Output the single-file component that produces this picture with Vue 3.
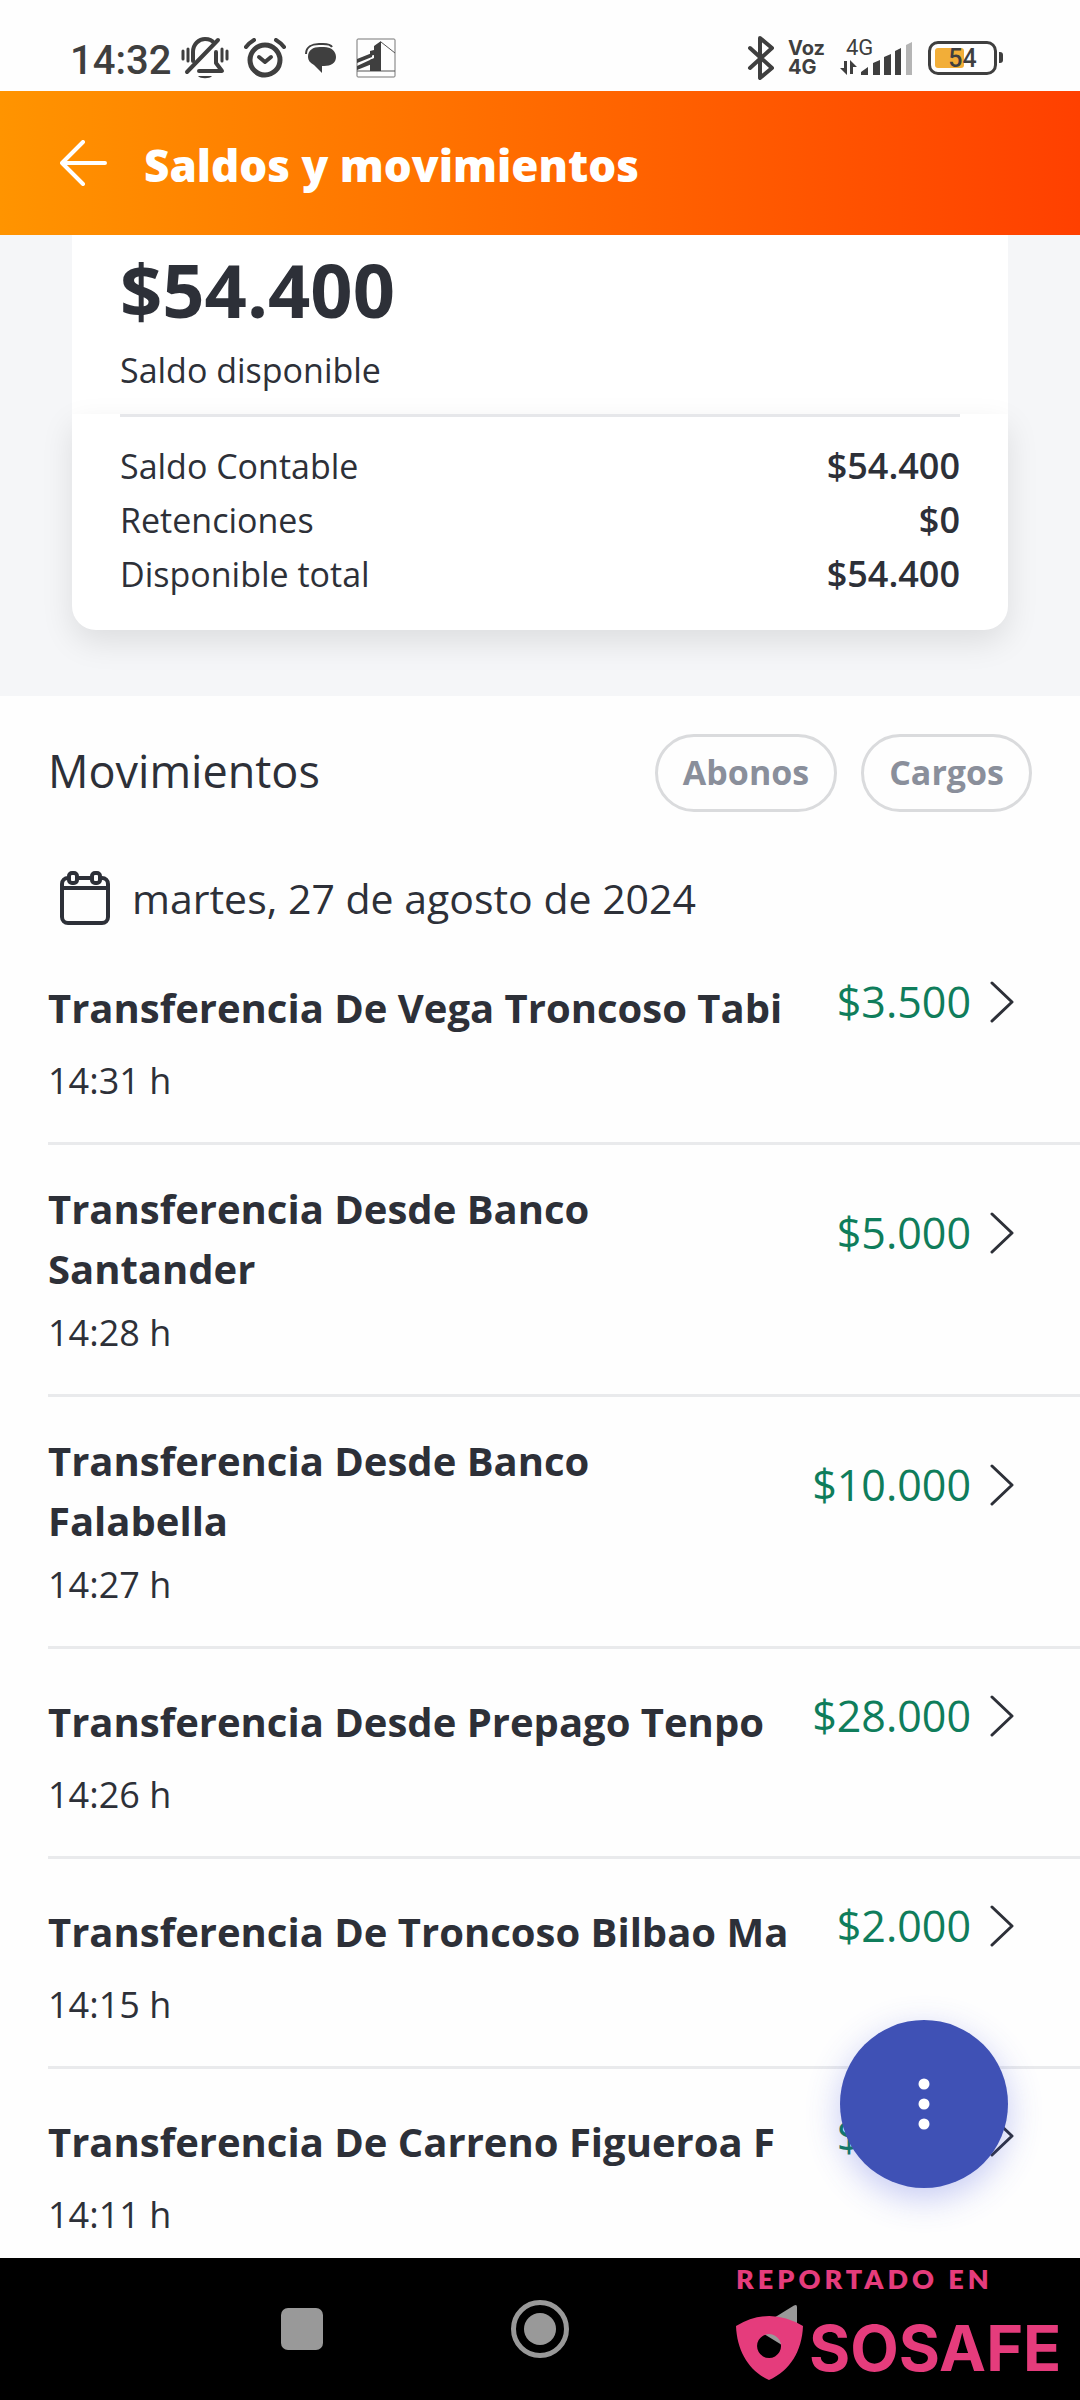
<script setup>
const balances = [
  { label: 'Saldo Contable', value: '$54.400' },
  { label: 'Retenciones', value: '$0' },
  { label: 'Disponible total', value: '$54.400' },
]

const filters = ['Abonos', 'Cargos']

const movements = [
  { title: 'Transferencia De Vega Troncoso Tabi', time: '14:31 h', amount: '$3.500' },
  { title: 'Transferencia Desde Banco Santander', time: '14:28 h', amount: '$5.000' },
  { title: 'Transferencia Desde Banco Falabella', time: '14:27 h', amount: '$10.000' },
  { title: 'Transferencia Desde Prepago Tenpo', time: '14:26 h', amount: '$28.000' },
  { title: 'Transferencia De Troncoso Bilbao Ma', time: '14:15 h', amount: '$2.000' },
  { title: 'Transferencia De Carreno Figueroa F', time: '14:11 h', amount: '$5.000' },
]
</script>

<template>
  <div class="app">
    <div class="status">
      <div class="status-left">
        <span class="clock">14:32</span>
        <svg class="i-bell" width="48" height="42" viewBox="0 0 48 42" fill="none" stroke="#3f3f3f" stroke-width="4" stroke-linecap="round">
          <path d="M2 14v8M7 12v12M46 14v8M41 12v12" stroke-width="3" />
          <path d="M12 24V15c0-8 6-13 12-13 4 0 7 1 9 4" />
          <path d="M35 15v11l6 8H18" stroke-linejoin="round" />
          <path d="M37 3L6 35" />
          <path d="M17 39h14c-2 3-12 3-14 0z" fill="#3f3f3f" stroke="none" />
        </svg>
        <svg class="i-alarm" width="42" height="40" viewBox="0 0 42 40" fill="none" stroke="#3f3f3f" stroke-linecap="round" stroke-linejoin="round">
          <circle cx="21" cy="22" r="15" stroke-width="5" />
          <path d="M15 19l6 5 6-5" stroke-width="4" />
          <path d="M2 9q3-4 8-7M40 9q-3-4-8-7" stroke-width="4" />
        </svg>
        <svg class="i-chat" width="32" height="32" viewBox="0 0 32 32">
          <path d="M1 12C1 5 7 2 14 2h4c5 0 8 1 9 3" fill="none" stroke="#3f3f3f" stroke-width="2" />
          <path d="M3 15C3 8 8 5 15 5h4c7 0 12 4 12 10 0 6-5 9-12 9h-2v7l-8-8c-4-2-6-5-6-8z" fill="#3f3f3f" />
        </svg>
        <svg class="i-photo" width="40" height="40" viewBox="0 0 40 40">
          <rect x="1" y="1" width="38" height="38" rx="1" fill="none" stroke="#777" />
          <path d="M1 33h38M25 4l14 11" stroke="#555" fill="none" />
          <path d="M14 33V22l4-2v-3l-4 1v-5l4-1V8l7-5v30z" fill="#3f3f3f" />
          <path d="M1 21l15-6v4L1 25zM1 28l15-7v5L1 32z" fill="#3f3f3f" />
        </svg>
      </div>
      <div class="status-right">
        <svg width="28" height="44" viewBox="0 0 28 44" fill="none" stroke="#3f3f3f" stroke-width="4" stroke-linecap="round" stroke-linejoin="round">
          <path d="M3 12l22 20-12 10V2l12 10L3 32" />
        </svg>
        <span class="volte"><span>Voz</span><span>4G</span></span>
        <span class="signal">
          <span class="net">4G</span>
          <svg width="74" height="36" viewBox="0 0 74 36" fill="#3f3f3f">
            <path d="M4 21h3v14l-7-7h4zM10 34V20l7 7h-4v7z" />
            <path d="M21 35v-3l7-5v8zM33 35V23l7-3v15zM44 35V17l7-3v21zM55 35V11l6-3v27z" />
            <path d="M66 35V5l6-3v33z" fill="#b5b5b5" />
          </svg>
        </span>
        <span class="battery"><span class="cell"><span class="charge"></span><span class="level">54</span></span></span>
      </div>
    </div>

    <header class="bar">
      <button class="back" type="button" aria-label="Volver">
        <svg width="48" height="46" viewBox="0 0 48 46" fill="none" stroke="#fff" stroke-width="4" stroke-linecap="round" stroke-linejoin="round">
          <path d="M23 2L2 23l21 21M2 23h43" />
        </svg>
      </button>
      <h1>Saldos y movimientos</h1>
    </header>

    <main class="content">
      <section class="summary">
        <div class="card-top">
          <p class="total">$54.400</p>
          <p class="total-label">Saldo disponible</p>
        </div>
        <div class="card-bottom">
          <dl>
            <div v-for="b in balances" :key="b.label" class="balance">
              <dt>{{ b.label }}</dt>
              <dd>{{ b.value }}</dd>
            </div>
          </dl>
        </div>
      </section>

      <section class="movements">
        <div class="head">
          <h2>Movimientos</h2>
          <button v-for="f in filters" :key="f" class="pill" type="button">{{ f }}</button>
        </div>
        <h3 class="date">
          <svg width="50" height="54" viewBox="0 0 50 54" fill="none" stroke="#2d3038" stroke-width="4">
            <path d="M9 7H8a6 6 0 0 0-6 6V46a6 6 0 0 0 6 6h34a6 6 0 0 0 6-6V13a6 6 0 0 0-6-6h-2M17 7h15M2 17h46" />
            <rect x="9" y="2" width="8" height="10" rx="3" />
            <rect x="32" y="2" width="8" height="10" rx="3" />
          </svg>
          martes, 27 de agosto de 2024
        </h3>
        <ul>
          <li v-for="m in movements" :key="m.time">
            <a class="row" href="#">
              <span class="info">
                <span class="title"><span>{{ m.title }}</span></span>
                <span class="time">{{ m.time }}</span>
              </span>
              <span class="amount">
                {{ m.amount }}
                <svg width="24" height="42" viewBox="0 0 24 42" fill="none" stroke="#2d3038" stroke-width="3" stroke-linecap="round" stroke-linejoin="round">
                  <path d="M2 2l20 19L2 40" />
                </svg>
              </span>
            </a>
          </li>
        </ul>
      </section>

      <button class="fab" type="button" aria-label="Más opciones">
        <svg width="12" height="52" viewBox="0 0 12 52" fill="#fff">
          <circle cx="6" cy="6" r="5.500" /><circle cx="6" cy="26" r="5.500" /><circle cx="6" cy="46" r="5.500" />
        </svg>
      </button>
    </main>

    <nav class="nav">
      <button type="button" aria-label="Recientes">
        <svg width="60" height="60" viewBox="0 0 60 60"><rect x="9" y="9" width="42" height="42" rx="7" fill="#999" /></svg>
      </button>
      <button type="button" aria-label="Inicio">
        <svg width="60" height="60" viewBox="0 0 60 60">
          <circle cx="30" cy="30" r="26.500" fill="none" stroke="#999" stroke-width="5" />
          <circle cx="30" cy="30" r="16" fill="#999" />
        </svg>
      </button>
      <button type="button" aria-label="Atrás">
        <svg width="60" height="60" viewBox="0 0 60 60"><path d="M46 6.500Q49 5 49 8v44q0 3-3 1.500L11 32q-2-2 0-4z" fill="#999" /></svg>
      </button>
      <div class="stamp">
        <span class="stamp-top">REPORTADO EN</span>
        <div class="stamp-brand">
          <svg width="67" height="64" viewBox="0 0 67 64" fill="#e53c7c">
            <path fill-rule="evenodd" d="M0 10Q33-10 67 10C66 35 54 55 33 64 13 55 1 35 0 10zM33 18a12 12 0 1 0 .1 0z" />
          </svg>
          <span>SOSAFE</span>
        </div>
      </div>
    </nav>
  </div>
</template>

<style>
body {
  margin: 0;
  background: #fff;
}
</style>

<style scoped>
.app {
  display: flex;
  flex-direction: column;
  height: 100vh;
  overflow: hidden;
  background: #fefefe;
  color: #2d3038;
  font-family: "Open Sans", "Noto Sans", sans-serif;
}
h1, h2, h3, p, ul, dl, dd {
  margin: 0;
  padding: 0;
}
ul {
  list-style: none;
}
button {
  margin: 0;
  padding: 0;
  border: 0;
  background: none;
  font-family: inherit;
  cursor: pointer;
}
svg {
  display: block;
  flex: none;
}

.status {
  display: flex;
  flex: none;
  justify-content: space-between;
  align-items: center;
  height: 67px;
  padding: 24px 77px 0 70px;
  color: #3f3f3f;
  font-family: Roboto, sans-serif;
}
.status-left,
.status-right {
  display: flex;
  align-items: center;
}
.clock {
  font-size: 40px;
  font-weight: 500;
  line-height: 40px;
  padding-top: 6px;
}
.i-bell {
  margin-left: 10px;
}
.i-alarm {
  margin-left: 15px;
}
.i-chat {
  margin-left: 19px;
}
.i-photo {
  margin-left: 19px;
}
.volte {
  display: flex;
  flex-direction: column;
  margin-left: 13px;
  width: 40px;
  font: 700 20px/19px Inter, sans-serif;
}
.signal {
  position: relative;
  margin-left: 12px;
}
.signal svg {
  margin-top: 1px;
}
.net {
  position: absolute;
  left: 6px;
  top: -2px;
  font-size: 22px;
  line-height: 22px;
}
.battery {
  display: flex;
  align-items: center;
  margin-left: 14px;
}
.battery::after {
  content: "";
  width: 4px;
  height: 11px;
  margin-left: 2px;
  border-radius: 0 3px 3px 0;
  background: #3f3f3f;
}
.cell {
  position: relative;
  box-sizing: border-box;
  width: 69px;
  height: 34px;
  padding: 4px;
  border: 3px solid #3f3f3f;
  border-radius: 10px;
}
.charge {
  display: block;
  width: 29px;
  height: 20px;
  border-radius: 3px;
  background: #f2ae38;
}
.level {
  position: absolute;
  inset: 0;
  font-size: 25px;
  font-weight: 500;
  line-height: 30px;
  text-align: center;
}

.bar {
  display: flex;
  flex: none;
  align-items: center;
  height: 144px;
  padding: 0 60px;
  gap: 36px;
  background: linear-gradient(90deg, #ff9400, #ff6a00 50%, #ff4000);
  color: #fff;
}
.bar h1 {
  padding-top: 4px;
  font-size: 44px;
  font-weight: 800;
  line-height: 60px;
}

.content {
  position: relative;
  flex: 1;
  min-height: 0;
  overflow: hidden;
}
.summary {
  padding: 0 72px 66px;
  background: #f5f6f8;
}
.card-top {
  height: 179px;
  padding: 0 48px;
  background: #fff;
}
.total {
  padding-top: 10px;
  font-size: 74px;
  font-weight: 700;
  line-height: 90px;
}
.total-label {
  padding-top: 8px;
  font-size: 34px;
  line-height: 54px;
}
.card-bottom {
  padding: 0 48px 29px;
  border-radius: 0 0 24px 24px;
  background: #fff;
  box-shadow: 0 12px 32px rgba(0, 0, 0, 0.1);
}
.card-bottom dl {
  padding-top: 22px;
  border-top: 3px solid #e6e7ea;
}
.balance {
  display: flex;
  justify-content: space-between;
  font-size: 34px;
  line-height: 54px;
}
.balance dd {
  font-size: 36px;
  font-weight: 600;
}

.head {
  display: flex;
  align-items: center;
  gap: 24px;
  padding: 38px 48px 0;
}
.head h2 {
  flex: 1;
  padding-bottom: 4px;
  font-size: 45px;
  font-weight: 400;
  line-height: 60px;
}
.pill {
  height: 78px;
  padding: 0 25px 2px;
  border: 3px solid #dadbdd;
  border-radius: 39px;
  color: #8a8f9b;
  font-size: 34px;
  font-weight: 700;
}
.date {
  display: flex;
  align-items: center;
  gap: 22px;
  padding: 56px 60px 7px;
  font-size: 41px;
  font-weight: 400;
  line-height: 60px;
}
.row {
  display: flex;
  justify-content: space-between;
  gap: 40px;
  margin-left: 48px;
  padding: 34px 66px 34px 0;
  color: inherit;
  text-decoration: none;
}
li:not(:last-child) .row {
  border-bottom: 3px solid #e9eaec;
}
.info {
  flex: 1;
}
.title {
  display: flex;
  align-items: center;
  min-height: 78px;
  font-size: 40px;
  font-weight: 700;
  line-height: 60px;
}
.time {
  display: block;
  padding-top: 7px;
  font-size: 36px;
  line-height: 54px;
}
.amount {
  display: flex;
  align-items: center;
  align-self: center;
  gap: 19px;
  padding-bottom: 74px;
  color: #0f7d5b;
  font-size: 43px;
  line-height: 60px;
}
.fab {
  position: absolute;
  right: 72px;
  bottom: 70px;
  display: flex;
  align-items: center;
  justify-content: center;
  width: 168px;
  height: 168px;
  border-radius: 50%;
  background: #3f51b5;
  box-shadow: 0 10px 34px rgba(63, 81, 220, 0.3);
}

.nav {
  position: relative;
  display: flex;
  flex: none;
  align-items: center;
  justify-content: center;
  gap: 178px;
  height: 142px;
  background: #000;
}
.stamp {
  position: absolute;
  right: 16px;
  top: 5px;
  width: 328px;
  color: #e53c7c;
  pointer-events: none;
}
.stamp-top {
  display: block;
  font: 800 27px/32px Lato, sans-serif;
  letter-spacing: 4px;
}
.stamp-brand {
  display: flex;
  align-items: center;
  gap: 6px;
  padding-top: 17px;
  font: 700 63px/72px Inter, sans-serif;
}
</style>
